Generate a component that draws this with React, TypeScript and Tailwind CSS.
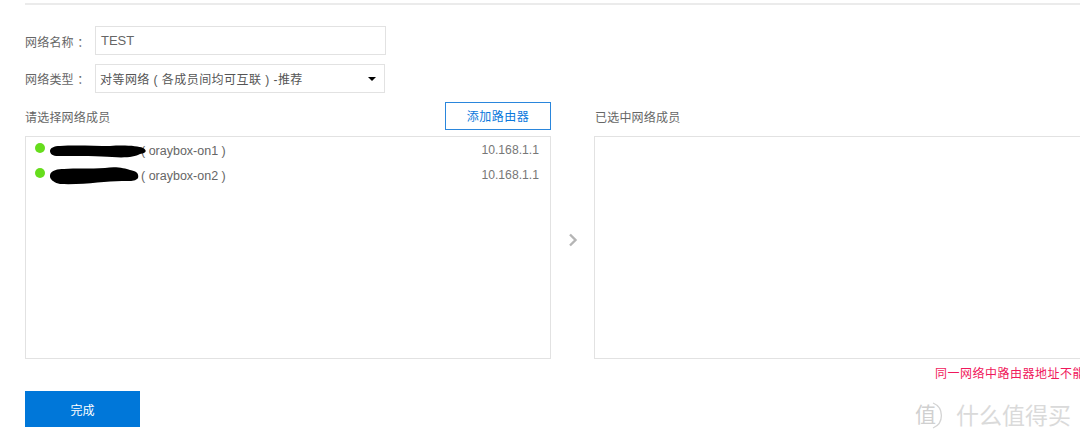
import React from "react";

const font = { fontFamily: '"Liberation Sans", "Noto Sans CJK SC", sans-serif' };

function Blob({ d }: { d: string }) {
  return (
    <svg width="100" height="20" viewBox="0 0 100 20" className="relative z-10 shrink-0 -mr-[9px]">
      <path d={d} fill="#000" />
    </svg>
  );
}

function Member({ blob, name }: { blob: string; name: string }) {
  return (
    <div className="flex items-center h-[25px] pr-[11px]">
      <span className="w-[10px] h-[10px] rounded-full bg-[#66dd1c] ml-[9px] mr-[5px] -mt-[6px] shrink-0" />
      <Blob d={blob} />
      <span className="text-[12.5px] text-[#666] whitespace-pre pt-[1px]">{name}</span>
      <span className="ml-auto text-[12.2px] text-[#777]">10.168.1.1</span>
    </div>
  );
}

export default function App() {
  return (
    <div style={font} className="relative w-[1080px] h-[441px] overflow-hidden bg-white pl-[25px] pt-[3px]">
      <div className="h-[2px] bg-[#ebebeb]" />

      <div className="flex items-center mt-[21px] h-[29px]">
        <span className="w-[70px] text-[12px] tracking-[0.2px] text-[#666] shrink-0 whitespace-pre pt-[4px]">网络名称 ：</span>
        <div className="w-[291px] h-[29px] border border-[#e2e2e2] pl-[5px] pt-[1px] flex items-center text-[13px] text-[#666]">TEST</div>
      </div>

      <div className="flex items-center mt-[9px] h-[29px]">
        <span className="w-[70px] text-[12px] tracking-[0.2px] text-[#666] shrink-0 whitespace-pre pt-[2px]">网络类型 ：</span>
        <div className="w-[290px] h-[29px] border border-[#e2e2e2] pl-[4px] pr-[8px] flex items-center justify-between text-[12px] tracking-[0.45px] text-[#555]">
          <span className="whitespace-pre pt-[2px]">对等网络 ( 各成员间均可互联 ) -推荐</span>
          <span className="w-0 h-0 border-x-[4px] border-x-transparent border-t-[4px] border-t-black" />
        </div>
      </div>

      <div className="flex mt-[9px]">
        <div className="w-[526px] shrink-0">
          <div className="flex items-center justify-between h-[28px]">
            <span className="text-[12px] tracking-[0.2px] text-[#666] mt-[4px]">请选择网络成员</span>
            <div className="w-[106px] h-[28px] border border-[#2a86dc] pt-[2px] flex items-center justify-center text-[12px] tracking-[0.5px] text-[#0b78dc]">添加路由器</div>
          </div>
          <div className="mt-[6px] h-[223px] border border-[#e2e2e2] pt-[1px]">
            <Member blob="M0 10 C0 7 4 5 10 5 C25 4 45 5 60 5 C75 4 88 5 93 7 C97 9 97 12 90 13 C85 16 75 17 62 16 C50 15 30 15 8 15 C3 15 0 13 0 10 Z" name="( oraybox-on1 )" />
            <Member blob="M0 9 C1 4 8 3 14 3 C25 2 40 3 55 2 C65 0 75 2 80 4 C87 5 89 8 88 12 C85 16 78 15 72 15 C55 15 35 19 10 18 C4 17 -1 13 0 9 Z" name="( oraybox-on2 )" />
          </div>
        </div>

        <div className="w-[43px] shrink-0 flex items-center justify-center pt-[18px]">
          <svg width="10" height="14" viewBox="0 0 10 14">
            <path d="M2 1.5 L7.5 7 L2 12.5" fill="none" stroke="#b5b5b5" strokeWidth="2.4" />
          </svg>
        </div>

        <div className="w-[500px] shrink-0">
          <div className="flex items-center h-[28px]">
            <span className="text-[12px] tracking-[0.2px] text-[#666] mt-[4px] ml-[1px]">已选中网络成员</span>
          </div>
          <div className="mt-[6px] h-[223px] border border-[#e2e2e2]" />
        </div>
      </div>

      <div className="absolute left-[935px] top-[367px] text-[12px] tracking-[0.5px] leading-[14px] text-[#f0185c] whitespace-nowrap">同一网络中路由器地址不能相同</div>

      <div className="w-[115px] h-[36px] mt-[32px] pt-[4px] bg-[#0077d9] flex items-center justify-center text-[12px] text-white">完成</div>

      <div className="absolute left-[913px] top-[401px] flex items-center text-[#dadada]">
        <div className="relative w-[31px] h-[29px]">
          <svg width="31" height="30" viewBox="0 0 31 30" className="absolute left-0 top-0">
            <path d="M20 2 A13.5 13.5 0 0 1 20 27" fill="none" stroke="#d4d4d4" strokeWidth="1.3" />
          </svg>
          <span className="absolute left-[2px] top-[3px] text-[21px] leading-[22px] text-[#d0d0d0]">值</span>
        </div>
        <span className="ml-[12px] text-[23px] leading-[28px]">什么值得买</span>
      </div>
    </div>
  );
}
